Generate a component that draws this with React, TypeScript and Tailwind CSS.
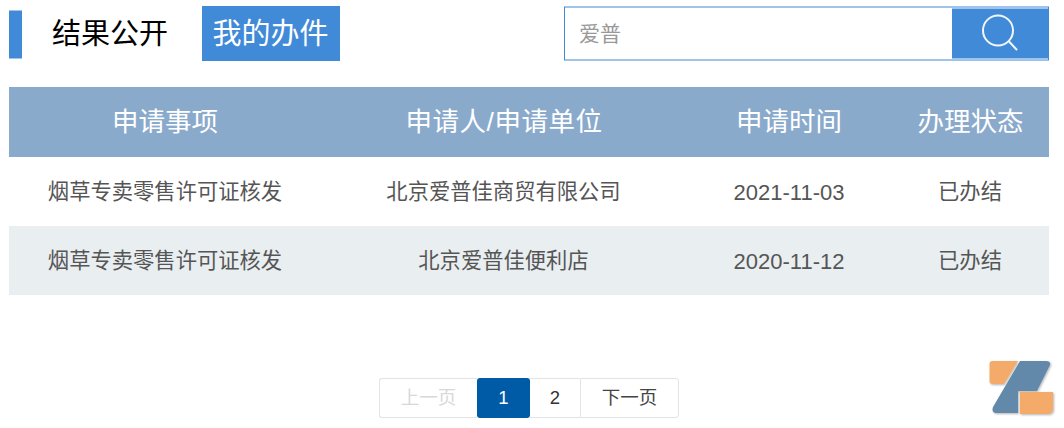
const font = "font-['Liberation_Sans','Noto_Sans_CJK_SC',sans-serif]";

const rows = [
  { item: "烟草专卖零售许可证核发", applicant: "北京爱普佳商贸有限公司", date: "2021-11-03", status: "已办结" },
  { item: "烟草专卖零售许可证核发", applicant: "北京爱普佳便利店", date: "2020-11-12", status: "已办结" },
];

function Logo() {
  return (
    <svg className="absolute left-[984px] top-[356px]" width="74" height="64" viewBox="0 0 74 64">
      <defs>
        <filter id="s" x="-10%" y="-10%" width="120%" height="120%">
          <feDropShadow dx="1" dy="1" stdDeviation="1" floodColor="#000" floodOpacity="0.3" />
        </filter>
      </defs>
      <g filter="url(#s)">
        <path d="M8.500 5H34L20 28H8.500q-3 0-3-3V8q0-3 3-3z" fill="#f4ab69" />
        <path d="M36 5h26q5 0 4 4L53 35H34v22H13q-6 0-4-6z" fill="#6389aa" />
        <path d="M36 36h33v17q0 5-5 5H36z" fill="#f4ab69" />
      </g>
    </svg>
  );
}

export default function App() {
  return (
    <div className={`relative h-[428px] w-[1064px] overflow-hidden bg-white pl-[9px] pr-[15px] pt-[6px] ${font}`}>
      <div className="flex h-[55px] items-center">
        <div className="h-[48px] w-[13px] translate-y-[0.500px] bg-[#418ad7]" />
        <div className="ml-[30px] pt-[2px] text-[29px] leading-[55px] text-black">结果公开</div>
        <div className="ml-[34px] flex h-[55px] w-[138px] items-center justify-center bg-[#418ad7] pr-[1px] pt-[3px] text-[29px] text-white">
          我的办件
        </div>
        <div className="ml-auto flex h-[54px] w-[485px] items-center border border-[#418ad7] pl-[14px] -translate-y-[0.500px]">
          <span className="flex-1 pt-[1px] text-[21px] text-[#999999]">爱普</span>
          <div className="flex h-[50px] w-[96px] items-center justify-center bg-[#418ad7]">
            <svg width="40" height="40" viewBox="0 0 40 40" fill="none" stroke="#f1f6fc" strokeWidth="2" strokeLinecap="round">
              <circle cx="18" cy="17" r="15" />
              <path d="M29 28l7.500 8" />
            </svg>
          </div>
        </div>
      </div>

      <table className="mt-[26px] w-[1040px] table-fixed border-collapse">
        <colgroup>
          <col className="w-[312px]" />
          <col className="w-[366px]" />
          <col className="w-[204px]" />
          <col className="w-[158px]" />
        </colgroup>
        <thead>
          <tr className="h-[70px] bg-[#8aaacc] text-[26.500px] text-white">
            <th className="pt-[2px] font-normal">申请事项</th>
            <th className="pt-[2px] font-normal tracking-[0.500px]">申请人/申请单位</th>
            <th className="pt-[2px] font-normal">申请时间</th>
            <th className="pl-[1px] pt-[2px] font-normal">办理状态</th>
          </tr>
        </thead>
        <tbody>
          {rows.map((row, i) => (
            <tr key={row.applicant} className={`h-[69px] text-center text-[21.300px] text-[#555555] ${i === 1 ? "bg-[#e9eef1]" : ""}`}>
              <td className="pt-[2px]">{row.item}</td>
              <td className="pr-[1px] pt-[2px]">{row.applicant}</td>
              <td className="pt-[2px] text-[22px]">{row.date}</td>
              <td className="pt-[2px]">{row.status}</td>
            </tr>
          ))}
        </tbody>
      </table>

      <div className="mt-[83px] flex justify-center">
        <div className="flex h-[40px] items-stretch text-[18.500px]">
          <span className="flex w-[98px] items-center justify-center rounded-l-[3px] border border-r-0 border-[#e3e3e3] text-[#d8d8d8]">上一页</span>
          <span className="flex w-[53px] items-center justify-center rounded-[3px] bg-[#005ba6] text-white">1</span>
          <span className="flex w-[50px] items-center justify-center border-y border-[#e3e3e3] text-[#333333]">2</span>
          <span className="flex w-[99px] items-center justify-center rounded-r-[3px] border border-[#e3e3e3] text-[#444444]">下一页</span>
        </div>
      </div>

      <Logo />
    </div>
  );
}
